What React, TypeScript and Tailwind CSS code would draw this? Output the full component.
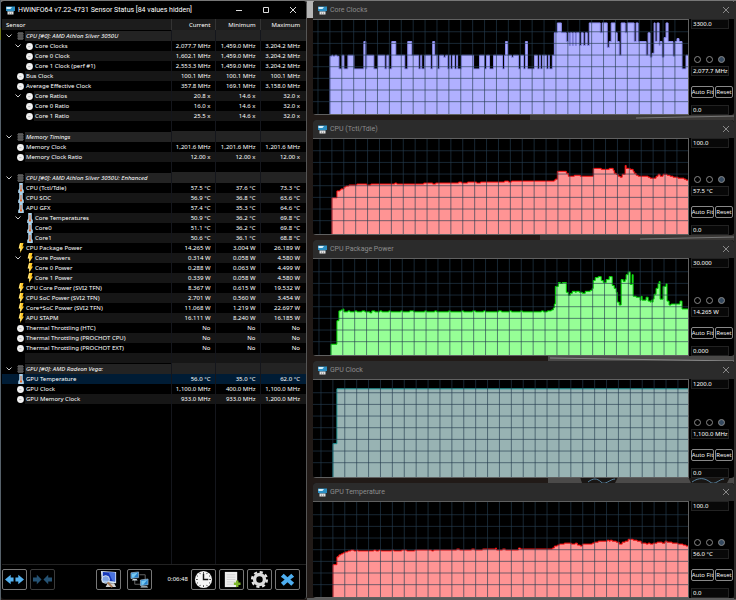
import React, { useMemo, useState } from "react";

type IconName = "clock" | "temp" | "bolt" | "chip";

type Row = {
  label?: string;
  icon?: IconName;
  group?: boolean;
  open?: boolean;
  depth?: number;
  values?: [string, string, string];
};

type Step = [number, number];

type Graph = {
  title: string;
  max: string;
  min: string;
  current: string;
  fill: string;
  stroke: string;
  height: number;
  sizeClass: string;
  gridX: number;
  gridY: number;
  steps: Step[];
};

const ROWS: Row[] = [
  { label: "CPU [#0]: AMD Athlon Silver 3050U", icon: "chip", group: true },
  { label: "Core Clocks", icon: "clock", open: true, depth: 1, values: ["2,077.7 MHz", "1,459.0 MHz", "3,204.2 MHz"] },
  { label: "Core 0 Clock", icon: "clock", depth: 1, values: ["1,602.1 MHz", "1,459.0 MHz", "3,204.2 MHz"] },
  { label: "Core 1 Clock (perf #1)", icon: "clock", depth: 1, values: ["2,553.3 MHz", "1,459.0 MHz", "3,204.2 MHz"] },
  { label: "Bus Clock", icon: "clock", values: ["100.1 MHz", "100.1 MHz", "100.1 MHz"] },
  { label: "Average Effective Clock", icon: "clock", values: ["357.8 MHz", "169.1 MHz", "3,158.0 MHz"] },
  { label: "Core Ratios", icon: "clock", open: true, depth: 1, values: ["20.8 x", "14.6 x", "32.0 x"] },
  { label: "Core 0 Ratio", icon: "clock", depth: 1, values: ["16.0 x", "14.6 x", "32.0 x"] },
  { label: "Core 1 Ratio", icon: "clock", depth: 1, values: ["25.5 x", "14.6 x", "32.0 x"] },
  {},
  { label: "Memory Timings", icon: "chip", group: true },
  { label: "Memory Clock", icon: "clock", values: ["1,201.6 MHz", "1,201.6 MHz", "1,201.6 MHz"] },
  { label: "Memory Clock Ratio", icon: "clock", values: ["12.00 x", "12.00 x", "12.00 x"] },
  {},
  { label: "CPU [#0]: AMD Athlon Silver 3050U: Enhanced", icon: "chip", group: true },
  { label: "CPU (Tctl/Tdie)", icon: "temp", values: ["57.5 °C", "37.6 °C", "73.3 °C"] },
  { label: "CPU SOC", icon: "temp", values: ["56.9 °C", "36.8 °C", "63.6 °C"] },
  { label: "APU GFX", icon: "temp", values: ["57.4 °C", "35.3 °C", "64.6 °C"] },
  { label: "Core Temperatures", icon: "temp", open: true, depth: 1, values: ["50.9 °C", "36.2 °C", "69.8 °C"] },
  { label: "Core0", icon: "temp", depth: 1, values: ["51.1 °C", "36.2 °C", "69.8 °C"] },
  { label: "Core1", icon: "temp", depth: 1, values: ["50.6 °C", "36.1 °C", "68.8 °C"] },
  { label: "CPU Package Power", icon: "bolt", values: ["14.265 W", "3.004 W", "26.189 W"] },
  { label: "Core Powers", icon: "bolt", open: true, depth: 1, values: ["0.314 W", "0.058 W", "4.580 W"] },
  { label: "Core 0 Power", icon: "bolt", depth: 1, values: ["0.288 W", "0.063 W", "4.499 W"] },
  { label: "Core 1 Power", icon: "bolt", depth: 1, values: ["0.339 W", "0.058 W", "4.580 W"] },
  { label: "CPU Core Power (SVI2 TFN)", icon: "bolt", values: ["8.367 W", "0.615 W", "19.532 W"] },
  { label: "CPU SoC Power (SVI2 TFN)", icon: "bolt", values: ["2.701 W", "0.560 W", "3.454 W"] },
  { label: "Core+SoC Power (SVI2 TFN)", icon: "bolt", values: ["11.068 W", "1.219 W", "22.697 W"] },
  { label: "APU STAPM", icon: "bolt", values: ["16.111 W", "8.240 W", "16.185 W"] },
  { label: "Thermal Throttling (HTC)", icon: "clock", values: ["No", "No", "No"] },
  { label: "Thermal Throttling (PROCHOT CPU)", icon: "clock", values: ["No", "No", "No"] },
  { label: "Thermal Throttling (PROCHOT EXT)", icon: "clock", values: ["No", "No", "No"] },
  {},
  { label: "GPU [#0]: AMD Radeon Vega:", icon: "chip", group: true },
  { label: "GPU Temperature", icon: "temp", values: ["56.0 °C", "35.0 °C", "62.0 °C"] },
  { label: "GPU Clock", icon: "clock", values: ["1,100.0 MHz", "400.0 MHz", "1,100.0 MHz"] },
  { label: "GPU Memory Clock", icon: "clock", values: ["933.0 MHz", "933.0 MHz", "1,200.0 MHz"] },
];

// Each step is [x, y]: the line holds y until the next x.
const CORE_CLOCKS: Step[] = [
  [17, 37], [19, 36], [20, 37], [22, 36], [24, 37], [26, 50], [29, 36], [31, 50], [35, 36], [41, 50], [51, 22],
  [53, 50], [54, 36], [61, 50], [65, 36], [72, 50], [74, 36], [76, 50], [79, 22], [83, 36], [92, 50], [95, 22],
  [99, 36], [106, 50], [108, 36], [109, 50], [112, 36], [118, 50], [120, 22], [122, 36], [125, 50], [127, 36],
  [131, 38], [133, 36], [135, 50], [137, 36], [138, 50], [140, 36], [142, 50], [144, 36], [145, 50], [149, 36],
  [161, 50], [167, 36], [172, 50], [174, 36], [177, 50], [181, 36], [190, 50], [192, 36], [193, 22], [195, 36],
  [199, 38], [201, 36], [206, 50], [208, 36], [211, 50], [213, 22], [215, 50], [222, 36], [225, 50], [227, 36],
  [228, 50], [230, 36], [234, 50], [236, 36], [237, 50], [240, 36], [242, 13], [245, 3], [249, 13], [254, 22],
  [256, 13], [257, 26], [258, 13], [260, 26], [261, 13], [263, 26], [264, 13], [267, 26], [269, 13], [271, 26],
  [273, 13], [275, 26], [277, 3], [288, 13], [290, 3], [295, 28], [297, 22], [299, 3], [303, 13], [305, 22],
  [307, 36], [309, 3], [313, 13], [315, 3], [322, 22], [324, 3], [326, 22], [334, 36], [336, 13], [338, 38],
  [340, 34], [342, 3], [343, 22], [345, 3], [347, 26], [348, 22], [350, 38], [352, 18], [354, 3], [356, 22],
  [361, 37], [363, 22], [365, 19], [367, 22], [370, 50], [374, 36],
];

const CPU_TEMP: Step[] = [
  [19, 60], [24, 53], [27, 52], [28, 51], [31, 49], [33, 48], [36, 47], [44, 46], [54, 47], [58, 46], [82, 45],
  [84, 46], [111, 45], [120, 46], [123, 45], [146, 44], [149, 45], [155, 44], [164, 45], [168, 44], [192, 43],
  [196, 44], [199, 43], [242, 42], [243, 41], [245, 33], [254, 35], [256, 38], [262, 37], [268, 38], [281, 30],
  [289, 31], [297, 30], [301, 32], [302, 35], [304, 36], [306, 38], [308, 39], [310, 36], [313, 27], [314, 30],
  [318, 31], [321, 33], [322, 35], [324, 37], [326, 38], [336, 39], [338, 40], [344, 38], [346, 36], [348, 38],
  [351, 36], [355, 37], [358, 38], [361, 39], [366, 40], [372, 41], [374, 42],
];

const CPU_POWER: Step[] = [
  [18, 87], [24, 63], [26, 53], [28, 52], [30, 51], [31, 54], [35, 53], [37, 54], [42, 53], [44, 54], [49, 53],
  [52, 54], [57, 55], [59, 53], [62, 54], [67, 53], [69, 54], [76, 53], [78, 54], [88, 53], [90, 54], [97, 53],
  [101, 54], [112, 53], [114, 54], [122, 53], [124, 54], [136, 53], [138, 54], [149, 53], [151, 54], [160, 53],
  [163, 54], [171, 53], [173, 54], [186, 53], [189, 54], [197, 53], [199, 54], [208, 53], [210, 54], [229, 53],
  [231, 54], [235, 53], [239, 52], [241, 50], [242, 46], [243, 28], [246, 24], [248, 25], [250, 24], [254, 34],
  [256, 37], [258, 35], [260, 33], [263, 34], [264, 33], [267, 34], [270, 35], [273, 33], [278, 32], [280, 30],
  [281, 22], [283, 19], [286, 18], [289, 22], [291, 24], [294, 21], [297, 18], [300, 27], [302, 30], [304, 34],
  [305, 44], [307, 47], [309, 21], [311, 23], [313, 21], [314, 16], [316, 13], [318, 26], [320, 16], [321, 38],
  [324, 39], [328, 42], [329, 38], [330, 42], [334, 39], [336, 43], [338, 44], [339, 42], [340, 44], [341, 41],
  [342, 36], [344, 30], [346, 25], [347, 23], [348, 41], [351, 28], [354, 25], [355, 43], [357, 47], [359, 46],
  [368, 43], [370, 51],
];

const GPU_CLOCK: Step[] = [[20, 65], [24, 9]];

const GPU_TEMP: Step[] = [
  [20, 64], [24, 56], [26, 54], [28, 53], [30, 52], [32, 51], [35, 50], [38, 49], [41, 50], [44, 49], [45, 50],
  [61, 49], [63, 50], [66, 49], [68, 50], [79, 49], [81, 50], [89, 49], [94, 50], [102, 49], [119, 50], [121, 49],
  [144, 48], [147, 49], [159, 48], [162, 49], [170, 48], [183, 47], [184, 49], [190, 48], [193, 49], [206, 47],
  [208, 48], [240, 47], [242, 45], [245, 44], [247, 43], [252, 42], [259, 43], [263, 42], [265, 44], [268, 45],
  [270, 43], [280, 42], [282, 41], [286, 40], [295, 39], [297, 40], [298, 39], [300, 40], [304, 41], [307, 43],
  [310, 41], [313, 40], [316, 38], [321, 39], [325, 40], [329, 42], [334, 43], [336, 42], [338, 43], [341, 42],
  [345, 41], [350, 42], [353, 40], [355, 41], [360, 42], [366, 43], [371, 44], [374, 45],
];

const GRAPHS: Graph[] = [
  { title: "Core Clocks", max: "3300.0", min: "0.0", current: "2,077.7 MHz", fill: "#b0b0ff", stroke: "#8c8cf0", height: 96, sizeClass: "h-[96px]", gridX: 5, gridY: 12, steps: CORE_CLOCKS },
  { title: "CPU (Tctl/Tdie)", max: "100.0", min: "0.0", current: "57.5 °C", fill: "#ff9494", stroke: "#ff1010", height: 97, sizeClass: "h-[97px]", gridX: 7, gridY: 12, steps: CPU_TEMP },
  { title: "CPU Package Power", max: "30.000", min: "0.000", current: "14.265 W", fill: "#96ff96", stroke: "#00d800", height: 98, sizeClass: "h-[98px]", gridX: 6, gridY: 13, steps: CPU_POWER },
  { title: "GPU Clock", max: "1200.0", min: "0.0", current: "1,100.0 MHz", fill: "#98b3b3", stroke: "#1f9a9a", height: 99, sizeClass: "h-[99px]", gridX: 8, gridY: 13, steps: GPU_CLOCK },
  { title: "GPU Temperature", max: "100.0", min: "0.0", current: "56.0 °C", fill: "#ff9494", stroke: "#ff1010", height: 97, sizeClass: "h-[97px]", gridX: 8, gridY: 13, steps: GPU_TEMP },
];

function buildPath(steps: Step[], bottom: number) {
  let d = `M${steps[0][0]} ${bottom}`;
  for (const [x, y] of steps) {
    d += `H${x}V${y}`;
  }
  return `${d}H376`;
}

export default function App() {
  const [selected, setSelected] = useState("GPU Temperature");

  return (
    <main className="relative isolate grid min-h-screen grid-cols-[307fr_429fr] bg-[#211a17] font-['Noto_Sans',sans-serif] text-[6px] leading-[10px] text-white">
      <Wallpaper />

      <section className="mb-px ml-px mt-px flex flex-col rounded-[3px] border-r border-[#555] bg-black pl-px">
        <header className="flex h-[18px] items-center font-['Roboto',sans-serif]">
          <AppIcon className="ml-1 h-[9px] w-[9px]" />
          <h1 className="ml-[3px] flex-1 whitespace-nowrap text-[7px]">HWiNFO64 v7.22-4731 Sensor Status [84 values hidden]</h1>
          <button type="button" aria-label="Minimize" className="flex h-full w-[27px] items-center justify-center">
            <svg viewBox="0 0 8 8" className="h-2 w-2" stroke="#ddd" fill="none"><path d="M1 4.5h6" /></svg>
          </button>
          <button type="button" aria-label="Maximize" className="flex h-full w-[27px] items-center justify-center">
            <svg viewBox="0 0 8 8" className="h-2 w-2" stroke="#ddd" fill="none"><path d="M1.5 1.5h5v5h-5z" /></svg>
          </button>
          <button type="button" aria-label="Close" className="flex h-full w-[27px] items-center justify-center">
            <CloseMark className="h-2 w-2 text-[#ddd]" />
          </button>
        </header>

        <table className="w-full table-fixed border-collapse">
          <colgroup>
            <col />
            <col className="w-11" />
            <col className="w-[45px]" />
            <col className="w-[46px]" />
          </colgroup>
          <thead>
            <tr className="h-[11px] bg-[#1c1c1c]">
              <th scope="col" className="p-0 pl-1 text-left font-normal">Sensor</th>
              <th scope="col" className="border-l border-[#333] p-0 pr-1 text-right font-normal">Current</th>
              <th scope="col" className="border-l border-[#333] p-0 pr-1 text-right font-normal">Minimum</th>
              <th scope="col" className="border-l border-[#333] p-0 pr-1.5 text-right font-normal">Maximum</th>
            </tr>
          </thead>
          <tbody>
            {ROWS.map((row, i) => (
              <SensorRow
                key={i}
                row={row}
                striped={i % 2 === 0}
                selected={row.label !== undefined && row.label === selected}
                onSelect={() => row.label && setSelected(row.label)}
              />
            ))}
            <tr className="h-40">
              <td className="p-0" />
              <td className="border-l border-[#14161c] p-0" />
              <td className="border-l border-[#14161c] p-0" />
              <td className="border-l border-[#14161c] p-0" />
            </tr>
          </tbody>
        </table>

        <footer className="flex flex-1 items-start border-t border-[#222] pr-[6px] pt-1">
          <ToolButton label="Expand columns">
            <path d="M2 10l6-5v3h3v4H8v3zM22 10l-6-5v3h-3v4h3v3z" fill="#55b1ee" />
          </ToolButton>
          <span className="w-[3px]" />
          <ToolButton label="Shrink columns" dim>
            <path d="M11 10L6 5v3H2v4h4v3zM13 10l5-5v3h4v4h-4v3z" fill="#255273" />
          </ToolButton>
          <span className="flex-1" />
          <ToolButton label="System summary">
            <path d="M4 1l16 1v12l-15-1z" fill="#dbe8f4" />
            <path d="M6 2l13 1v9L6 11z" fill="#1638b8" />
            <path d="M12 2l7 1v9l-3-1z" fill="#4a73df" />
            <path d="M11 14h7l2 4H9z" fill="#d4d4d4" />
            <circle cx="9" cy="10" r="4" fill="#9dc1ef" fillOpacity=".8" stroke="#d9e5f0" />
            <path d="M11 13l5 5" stroke="#a87954" strokeWidth="2" />
          </ToolButton>
          <span className="w-1.5" />
          <ToolButton label="Remote monitoring">
            <path d="M12 5h6v6M7 10v5h6" stroke="#666" fill="none" />
            <path d="M3 3l8-1v6l-8 1z" fill="#2580ca" stroke="#c4dae9" strokeWidth=".6" />
            <path d="M4 4l6-1-4 5-2 .2z" fill="#76c7f2" />
            <path d="M5 9.500h4l1 1.500H4zM14 17h6l1 1.500h-8z" fill="#c8d4da" />
            <path d="M13 10.500l8-1v6l-8 1z" fill="#2580ca" stroke="#c4dae9" strokeWidth=".6" />
            <path d="M14 11.500l6-1-4 5-2 .2z" fill="#76c7f2" />
          </ToolButton>
          <time className="mt-[5px] w-[39px] pr-[3px] text-right">0:06:48</time>
          <ToolButton label="Reset timer">
            <circle cx="12" cy="10" r="9" fill="#f5f5f5" />
            <path d="M12 2v2M12 16v2M4 10h2M18 10h2M8 3l.7 1.3M16 3l-.7 1.3M8 17l.7-1.3M16 17l-.7-1.3M5 6l1.2.7M19 6l-1.2.7M5 14l1.2-.7M19 14l-1.2-.7" stroke="#333" strokeWidth=".9" />
            <path d="M12 4v6h5" stroke="#111" strokeWidth="1.500" fill="none" />
          </ToolButton>
          <span className="w-[3px]" />
          <ToolButton label="Start logging">
            <path d="M5 2h13v16H5z" fill="#eee" />
            <path d="M7 5h9M7 7.500h9M7 10h9M7 12.500h9M7 15h9" stroke="#ccc" strokeWidth=".8" />
            <path d="M18 11v7M14.500 14.500h7" stroke="#7fb72d" strokeWidth="2.600" />
          </ToolButton>
          <span className="w-[3px]" />
          <ToolButton label="Settings">
            <circle cx="12" cy="10" r="7.800" fill="none" stroke="#e4e4e4" strokeWidth="2.400" strokeDasharray="3.300 2.826" />
            <circle cx="12" cy="10" r="5.200" fill="none" stroke="#dcdcdc" strokeWidth="3.600" />
          </ToolButton>
          <span className="w-[3px]" />
          <ToolButton label="Close sensors">
            <path d="M8 4l4 3.500L16 4l3 3-4 3 4 3.500-3 3-4-3.500-4 3.500-3-3L9 10 5 7z" fill="#4eaef0" />
          </ToolButton>
        </footer>
      </section>

      <section className="ml-[6px] mr-[2px] mt-px flex flex-col gap-[5px]">
        {GRAPHS.map((g) => (
          <GraphWindow key={g.title} graph={g} />
        ))}
      </section>
    </main>
  );
}

function SensorRow(props: { row: Row; striped: boolean; selected: boolean; onSelect: () => void }) {
  const { row, striped, selected, onSelect } = props;
  const shade = selected ? "" : row.group ? "bg-[#232323]" : striped ? "bg-[#161616]" : "";

  return (
    <tr onClick={onSelect} className={selected ? "h-[10px] bg-[#001c35]" : row.group ? "h-[11px]" : "h-[10px]"}>
      <td className="p-0">
        <div className="flex h-[10px] items-center">
          <span className={row.depth ? "flex w-[23px] justify-end pr-1" : "flex w-[14px] justify-end pr-1"}>
            {row.group || row.open ? (
              <svg viewBox="0 0 6 6" className="h-[6px] w-[6px] shrink-0" fill="none" stroke="#ccc"><path d="M.5 1.500L3 4l2.500-2.500" /></svg>
            ) : null}
          </span>
          <span className="flex w-[9px] justify-center">
            {row.icon ? <SensorIcon name={row.icon} /> : null}
          </span>
          <span className={`h-[10px] min-w-0 flex-1 whitespace-nowrap pl-px ${row.group ? "italic" : ""} ${shade}`}>{row.label}</span>
        </div>
      </td>
      {[0, 1, 2].map((i) => (
        <td key={i} className={`whitespace-nowrap border-l border-[#14161c] p-0 text-right ${i === 2 ? "pr-1.5" : "pr-1"} ${shade}`}>
          {row.values ? row.values[i] : null}
        </td>
      ))}
    </tr>
  );
}

function SensorIcon({ name }: { name: IconName }) {
  if (name === "clock") {
    return (
      <svg viewBox="0 0 8 8" className="h-[7px] w-[7px] shrink-0">
        <circle cx="4" cy="4" r="3.900" fill="#f2f2f2" />
        <path d="M2.500 4.200h2.500" stroke="#999" strokeWidth=".7" />
      </svg>
    );
  }
  if (name === "temp") {
    return (
      <svg viewBox="0 0 6 10" className="h-[10px] w-[6px] shrink-0">
        <path d="M1.200 0h3.600v5.500L5.800 7.500V10H.2V7.500l1-2z" fill="#a9d0ea" />
        <path d="M3 2v5" stroke="#e0703c" />
        <circle cx="3" cy="7.600" r="1.100" fill="#e8641e" />
      </svg>
    );
  }
  if (name === "bolt") {
    return (
      <svg viewBox="0 0 6 10" className="h-[10px] w-[6px] shrink-0">
        <path d="M2 0h3.500L4.500 3.500H6L2 10l.6-4.500H.6z" fill="#ffc928" />
        <path d="M2.500.5L1.500 5h1.300l-.4 3" stroke="#fff3a8" strokeWidth=".8" fill="none" />
      </svg>
    );
  }
  return (
    <svg viewBox="0 0 7 8" className="h-2 w-[7px] shrink-0">
      <path d="M1 0h5v8H1z" fill="#4a4a4a" />
      <path d="M0 1.500h7M0 3.200h7M0 4.900h7M0 6.600h7" stroke="#666" strokeWidth=".6" />
    </svg>
  );
}

function GraphWindow({ graph }: { graph: Graph }) {
  const [mode, setMode] = useState(2);
  const line = useMemo(() => buildPath(graph.steps, graph.height), [graph]);

  const columns = Array.from({ length: 31 }, (_, i) => graph.gridX + i * 11.93);
  const lines = Array.from({ length: 7 }, (_, i) => graph.gridY + i * 11.9);

  return (
    <article className="overflow-hidden rounded-[3px] bg-black">
      <header className="flex h-[18px] items-center bg-[#2b2b2b] pl-[5px] font-['Roboto',sans-serif] text-[#8c8c8c]">
        <AppIcon className="h-[9px] w-[9px]" />
        <h2 className="ml-[3px] flex-1 text-[7px]">{graph.title}</h2>
        <button type="button" aria-label={`Close ${graph.title}`} className="mr-[2px] flex h-full w-3 items-center justify-center">
          <CloseMark className="h-2 w-2 text-[#888]" />
        </button>
      </header>

      <div className={`flex ${graph.sizeClass}`}>
        <div className="min-w-0 flex-1 border-y border-r border-[#606060]">
          <svg viewBox={`0 0 376 ${graph.height}`} preserveAspectRatio="none" className="block h-full w-full" role="img" aria-label={`${graph.title} history`}>
            <path d={`${line}V${graph.height}Z`} fill={graph.fill} />
            <path d={line} fill="none" stroke={graph.stroke} />
            {columns.map((x) => (
              <path key={`v${x}`} d={`M${x} 0V${graph.height}`} stroke="#263d50" strokeOpacity=".65" />
            ))}
            {lines.map((y) => (
              <path key={`h${y}`} d={`M0 ${y}H376`} stroke="#263d50" strokeOpacity=".65" />
            ))}
          </svg>
        </div>

        <div className="flex w-[45px] flex-col pl-[2px]">
          <ValueBox label={`${graph.title} maximum`} value={graph.max} />
          <div className="mt-auto flex gap-[5px] pl-[3px]">
            {[0, 1, 2].map((i) => (
              <input
                key={i}
                type="radio"
                name={graph.title}
                aria-label={`${graph.title} mode ${i + 1}`}
                checked={mode === i}
                onChange={() => setMode(i)}
                className="h-[7px] w-[7px] appearance-none rounded-full border border-[#888] checked:bg-[#34485e]"
              />
            ))}
          </div>
          <div className="mt-[3px]">
            <ValueBox label={`${graph.title} current`} value={graph.current} />
          </div>
          <div className="mb-[7px] mt-[10px] flex gap-px">
            <button type="button" className="flex h-3 w-[23px] items-center justify-center whitespace-nowrap rounded-[2px] border border-[#888] font-['Open_Sans',sans-serif]">Auto Fit</button>
            <button type="button" className="flex h-3 w-[18px] items-center justify-center whitespace-nowrap rounded-[2px] border border-[#888] font-['Open_Sans',sans-serif]">Reset</button>
          </div>
          <ValueBox label={`${graph.title} minimum`} value={graph.min} />
        </div>
      </div>
    </article>
  );
}

function ValueBox({ label, value }: { label: string; value: string }) {
  return (
    <input
      type="text"
      readOnly
      aria-label={label}
      value={value}
      className="block h-[10px] w-[38px] border border-[#222] bg-[#080808] pl-px text-[6px] leading-[8px] text-white outline-none"
    />
  );
}

function ToolButton(props: { label: string; dim?: boolean; children: React.ReactNode }) {
  return (
    <button
      type="button"
      aria-label={props.label}
      disabled={props.dim}
      className={`flex h-[21px] w-[25px] shrink-0 items-center justify-center rounded-[2px] border ${props.dim ? "border-[#3a3a3a]" : "border-[#777]"}`}
    >
      <svg viewBox="0 0 24 20" className="h-[19px] w-[23px]">{props.children}</svg>
    </button>
  );
}

function AppIcon({ className }: { className: string }) {
  return (
    <svg viewBox="0 0 9 9" className={className}>
      <path d="M0 .5h9V5H0z" fill="#2b8fc4" />
      <path d="M.5 1H6L4.500 3H.5z" fill="#d3effb" />
      <path d="M1 5h7v1H1z" fill="#17445f" />
      <path d="M1.500 5.500h6v3h-6z" fill="#e2e2e2" />
      <path d="M3.500 6.500v2M5.500 6.500v2" stroke="#666" strokeWidth=".5" />
    </svg>
  );
}

function CloseMark({ className }: { className: string }) {
  return (
    <svg viewBox="0 0 8 8" className={className} fill="none" stroke="currentColor">
      <path d="M1 1l6 6M7 1L1 7" />
    </svg>
  );
}

function Wallpaper() {
  return (
    <svg viewBox="0 0 736 600" preserveAspectRatio="none" className="absolute inset-0 -z-10 h-full w-full" aria-hidden="true">
      <path d="M0 0h736v2H0z" fill="#777" />
      <path d="M307 1h7v17h-7z" fill="#b5b5b5" />
      <path d="M0 0h1v600H0z" fill="#56616a" />
      <path d="M0 28h1v12H0z" fill="#6f7a1e" />
      <path d="M307 598h429v2H307z" fill="#5a5a5a" />
      <path d="M530 113h206v8H530zM540 234h196v7H540z" fill="#3a3836" />
      <path d="M636 118l100-2M640 239l96-2" stroke="#777" />
      <path d="M548 355h188v7H548z" fill="#4a4948" />
      <path d="M550 358l186 3" stroke="#888" />
      <path d="M548 477h188v7H548z" fill="#4b4a49" />
      <path d="M580 477h38l-3 6h-33zM688 477h42l-3 6h-36z" fill="#191614" />
      <path d="M588 482c5-4 9-4 13 0s9-3 14-3M692 482c7-5 13-4 18 0s9-3 14-3" stroke="#56809c" fill="none" />
      <path d="M734 1h2v598h-2z" fill="#2c2b2a" />
    </svg>
  );
}
